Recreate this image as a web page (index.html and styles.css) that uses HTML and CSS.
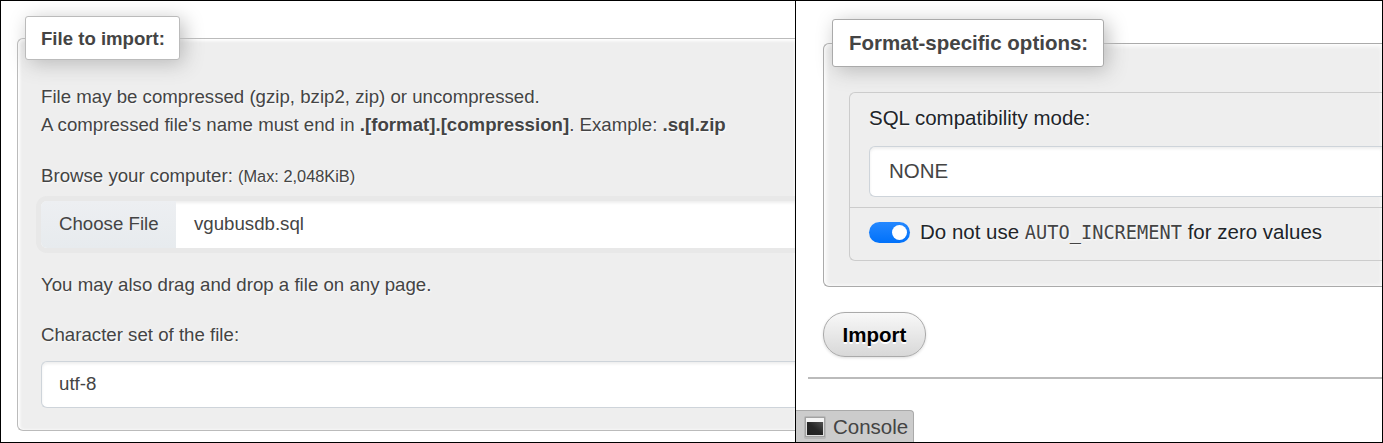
FILE: index.html
```
<!DOCTYPE html>
<html lang="en">
<head>
<meta charset="utf-8">
<title>Import</title>
<link rel="stylesheet" href="styles.css">
</head>
<body>
<main class="frame">
  <section class="pane pane-file">
    <div class="group group-file">
      <h2 class="legend">File to import:</h2>
      <p class="help">
        <span class="line line-one">File may be compressed (gzip, bzip2, zip) or uncompressed.</span>
        <span class="line line-two">A compressed file's name must end in <b>.[format].[compression]</b>. Example: <b>.sql.zip</b></span>
      </p>
      <div class="line browse">Browse your computer: <small>(Max: 2,048KiB)</small></div>
      <div class="file-input"><span class="file-button">Choose File</span><span class="file-name">vgubusdb.sql</span></div>
      <p class="line drag">You may also drag and drop a file on any page.</p>
      <div class="line charset">Character set of the file:</div>
      <div class="select select-charset">utf-8</div>
    </div>
  </section>
  <section class="pane pane-format">
    <div class="group group-format">
      <h2 class="legend">Format-specific options:</h2>
      <div class="card">
        <div class="card-row mode">
          <div class="mode-label">SQL compatibility mode:</div>
          <div class="select select-mode">NONE</div>
        </div>
        <div class="card-row zero">
          <span class="switch"><span class="knob"></span></span>
          <span class="zero-label">Do not use <code>AUTO_INCREMENT</code> for zero values</span>
        </div>
      </div>
    </div>
    <button class="import">Import</button>
    <div class="rule"></div>
    <div class="console">
      <svg class="console-icon" width="22" height="24" viewBox="0 0 22 24">
        <defs>
          <linearGradient id="screen" x1="0" y1="1" x2="1" y2="0">
            <stop offset="0" stop-color="#222"/><stop offset=".5" stop-color="#262626"/><stop offset="1" stop-color="#505050"/>
          </linearGradient>
        </defs>
        <rect x="0" y="0" width="22" height="23" rx="2" fill="#b8b8b8"/>
        <rect x="1.5" y="1.5" width="19" height="19" fill="#e0e0e0" stroke="#a2a2a2"/>
        <rect x="2" y="2" width="18" height="4" fill="#f4f4f4"/>
        <rect x="3" y="6" width="16" height="13" fill="url(#screen)"/>
      </svg>
      <span>Console</span>
    </div>
  </section>
</main>
</body>
</html>
```
FILE: styles.css
```
* { box-sizing: border-box; }
body { margin: 0; background: #fff; font-family: "Liberation Sans", Arial, sans-serif; color: #444; }
.frame { display: flex; width: 1383px; height: 443px; border: 1px solid #000; overflow: hidden; }
.pane { overflow: hidden; white-space: nowrap; }
.pane-file { width: 795px; flex: none; border-right: 1px solid #000; padding: 37px 0 0 16px; font-size: 18.66px; }
.pane-format { flex: 1; display: flex; flex-direction: column; align-items: flex-start; padding-top: 42px; font-size: 20.5px; }
.pane-format > * { flex: none; }
.group { background: #eee; border: 1px solid #aaa; border-right: 0; text-shadow: 1px 1px 2px #fff; }
.group-file { height: 393px; width: 778px; padding-left: 23px; border-color: #bbb; border-radius: 6px 0 0 6px; box-shadow: inset 1px 1px 3px 1px #fff; }
.group-format { height: 244px; width: 559px; margin-left: 27px; padding-left: 25px; border-radius: 6px 0 0 6px; box-shadow: inset 1px 1px 4px 1px #fff; }
.legend { margin: 0; display: flex; align-items: center; background: #fff; border: 1px solid #aaa; border-radius: 3px; font-weight: bold; text-shadow: none; }
.group-file .legend { width: 155px; height: 44px; margin: -23px 0 23px -16px; padding: 2px 0 0 15px; font-size: 18.6px; border-color: #bbb; box-shadow: 4px 4px 20px #bbb; }
.group-format .legend { width: 272px; height: 48px; margin: -25px 0 25px -17px; padding-left: 16px; font-size: 20.5px; box-shadow: 4px 4px 20px #bbb; }
.help { margin: 0 0 23px; }
.line { display: block; height: 28px; line-height: 28px; margin: 0; }
.browse small { font-size: 16.35px; }
.file-input { display: flex; height: 47px; margin-top: 11px; line-height: 45px; background: #fff; border-radius: 6px 0 0 6px; box-shadow: 0 0 0 5px #e8e8e8, inset 0 2px 3px #eee; }
.file-button { width: 135px; padding-left: 18px; background: linear-gradient(#edeff2, #e7ebee); border-radius: 6px 0 0 6px; text-shadow: none; }
.file-name { padding-left: 18px; text-shadow: none; }
.drag { margin-top: 23px; }
.charset { margin-top: 22px; }
.select { background: #fff; border: 1px solid #ced4da; border-right: 0; border-radius: 6px 0 0 6px; box-shadow: inset 0 2px 3px #eee; text-shadow: none; }
.select-charset { height: 47px; margin-top: 12px; padding-left: 17px; line-height: 44px; }
.card { height: 169px; border: 1px solid #ccc; border-right: 0; border-radius: 6px 0 0 6px; color: #212529; }
.card-row { padding-left: 19px; }
.mode { height: 115px; border-bottom: 1px solid #ccc; padding-top: 10px; }
.mode-label { height: 31px; line-height: 30px; }
.select-mode { height: 51px; margin-top: 12px; padding-left: 19px; line-height: 48px; color: #444; }
.zero { display: flex; align-items: center; height: 49px; gap: 10px; }
.switch { display: flex; align-items: center; justify-content: flex-end; width: 41px; height: 21px; padding-right: 3px; border-radius: 11px; background: linear-gradient(#2588ff, #0071fa); }
.knob { width: 15px; height: 15px; border-radius: 50%; background: #fff; }
.zero-label { line-height: 24px; }
.zero-label code { font-family: "DejaVu Sans Mono", monospace; font-size: 18.65px; color: #444; }
.import { width: 103px; height: 45px; margin: 25px 0 0 27px; padding: 0; border: 1px solid #aaa; border-radius: 22px; background: linear-gradient(#f8f8f8, #d8d8d8); font: bold 20.5px "Liberation Sans", Arial, sans-serif; color: #000; text-shadow: 0 2px 0 #fff; box-shadow: 0 1px 3px #ddd; }
.rule { width: 574px; height: 2px; margin: 20px 0 0 12px; background: #bbb; }
.console { display: flex; align-items: center; gap: 7px; width: 118px; height: 32px; margin-top: 31px; padding-left: 8px; border: 1px solid #aaa; border-left: 0; border-bottom: 0; border-radius: 0 4px 0 0; background: #ccc; }
.console-icon { flex: none; margin-top: 3px; }
```
